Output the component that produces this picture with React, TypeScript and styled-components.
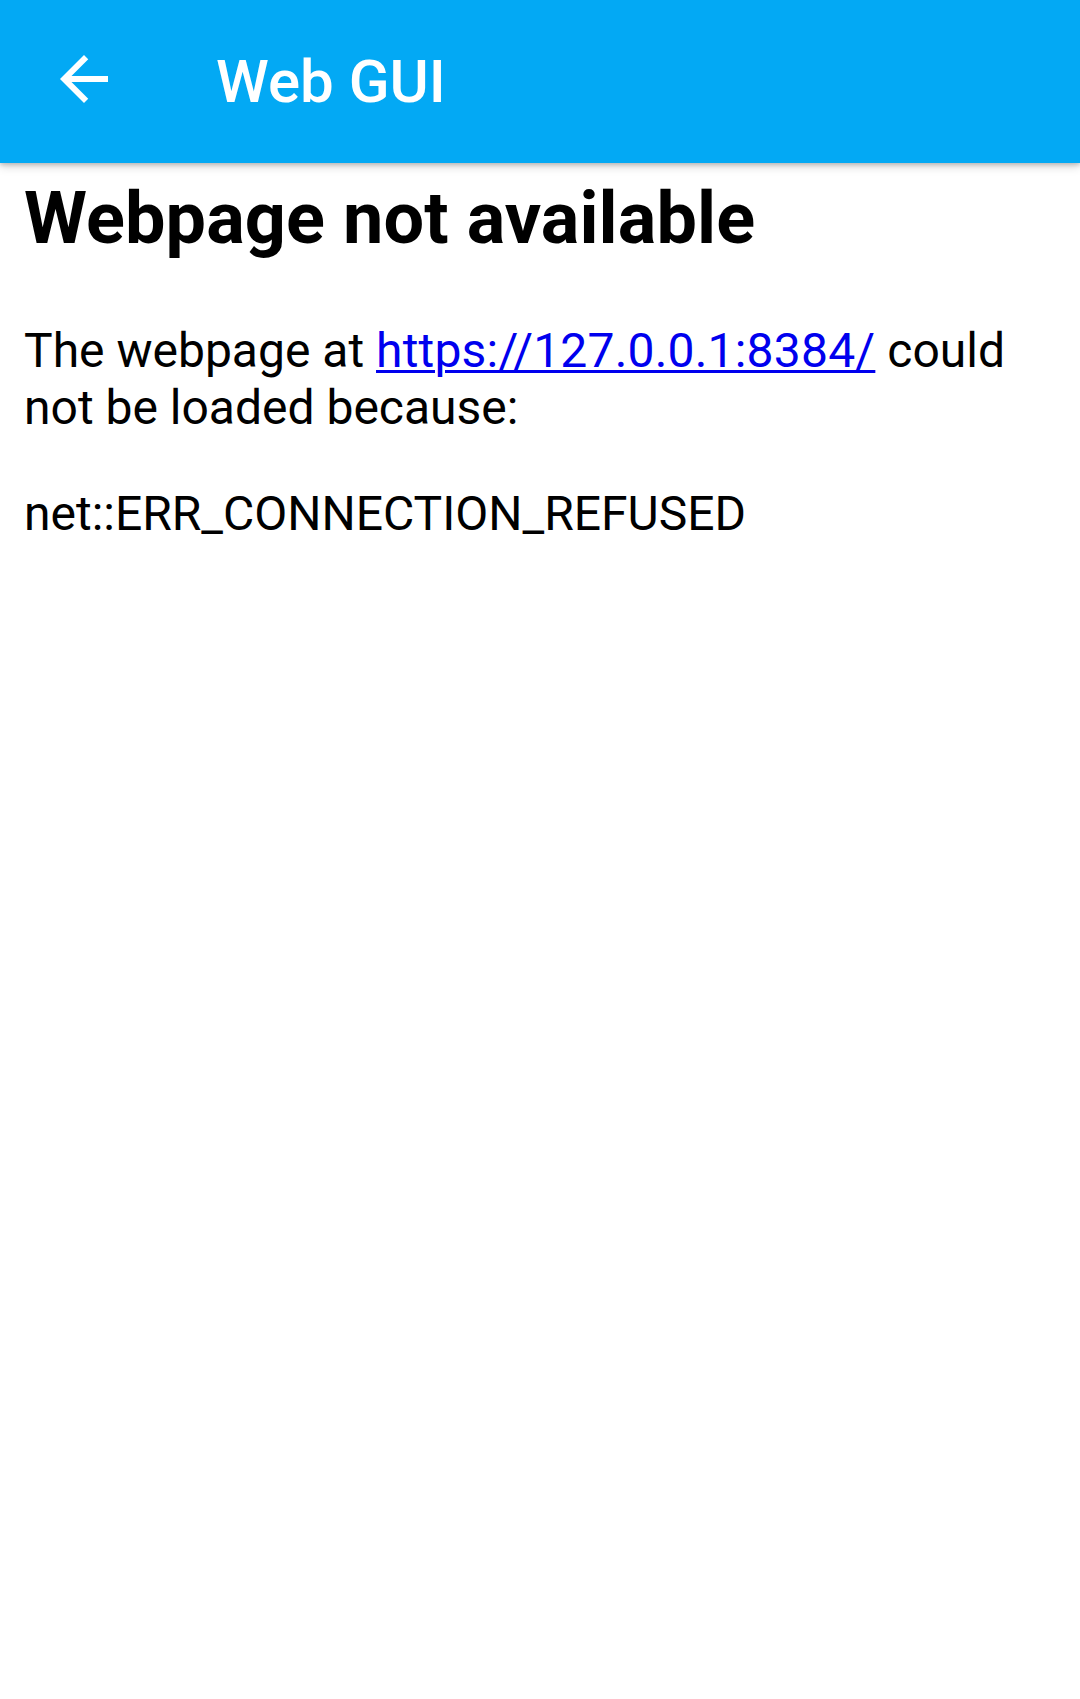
import React from "react";
import styled, { createGlobalStyle } from "styled-components";

const GlobalStyle = createGlobalStyle`
  html, body {
    margin: 0;
    padding: 0;
    background: #ffffff;
  }
  body {
    font-family: Roboto, "Noto Sans", "Liberation Sans", sans-serif;
    -webkit-font-smoothing: antialiased;
  }
`;

const Screen = styled.div`
  width: 1080px;
  min-height: 1699px;
  background: #ffffff;
  display: flex;
  flex-direction: column;
`;

const Toolbar = styled.header`
  position: relative;
  z-index: 1;
  height: 163px;
  background: #03a9f4;
  display: flex;
  align-items: center;
  box-shadow: 0 2px 4px rgba(0, 0, 0, 0.18), 0 4px 9px rgba(0, 0, 0, 0.14);
`;

const NavButton = styled.button`
  width: 72px;
  height: 72px;
  margin: 0 0 5px 48px;
  padding: 0;
  border: none;
  background: transparent;
  display: flex;
  align-items: center;
  justify-content: center;
  color: #ffffff;
`;

const Title = styled.h1`
  margin: 0 0 0 96px;
  font-family: Roboto, "Noto Sans", sans-serif;
  font-weight: 500;
  font-size: 60px;
  line-height: normal;
  color: #ffffff;
`;

const Content = styled.main`
  padding: 14px 24px 0 24px;
  color: #000000;
  font-family: Roboto, "Noto Sans", sans-serif;
`;

const Heading = styled.h2`
  margin: 0 0 61px 0;
  font-size: 72px;
  font-weight: 700;
  line-height: 84px;
  letter-spacing: 0.1px;
`;

const Paragraph = styled.p`
  margin: 0 0 49px 0;
  font-size: 48px;
  font-weight: 400;
  line-height: 57px;
`;

const Link = styled.a`
  color: #0000ee;
  text-decoration: underline;
  text-underline-offset: 3px;
  text-decoration-thickness: 3px;
  letter-spacing: 0.2px;
`;

const BackArrow = () => (
  <svg width="72" height="72" viewBox="0 0 24 24" fill="currentColor">
    <path d="M20 11H7.83l5.59-5.59L12 4l-8 8 8 8 1.41-1.41L7.83 13H20v-2z" />
  </svg>
);

export default function App() {
  return (
    <>
      <GlobalStyle />
      <Screen>
        <Toolbar>
          <NavButton aria-label="Back">
            <BackArrow />
          </NavButton>
          <Title>Web GUI</Title>
        </Toolbar>
        <Content>
          <Heading>Webpage not available</Heading>
          <Paragraph>
            The webpage at <Link href="#">https://127.0.0.1:8384/</Link> could
            not be loaded because:
          </Paragraph>
          <Paragraph>net::ERR_CONNECTION_REFUSED</Paragraph>
        </Content>
      </Screen>
    </>
  );
}
